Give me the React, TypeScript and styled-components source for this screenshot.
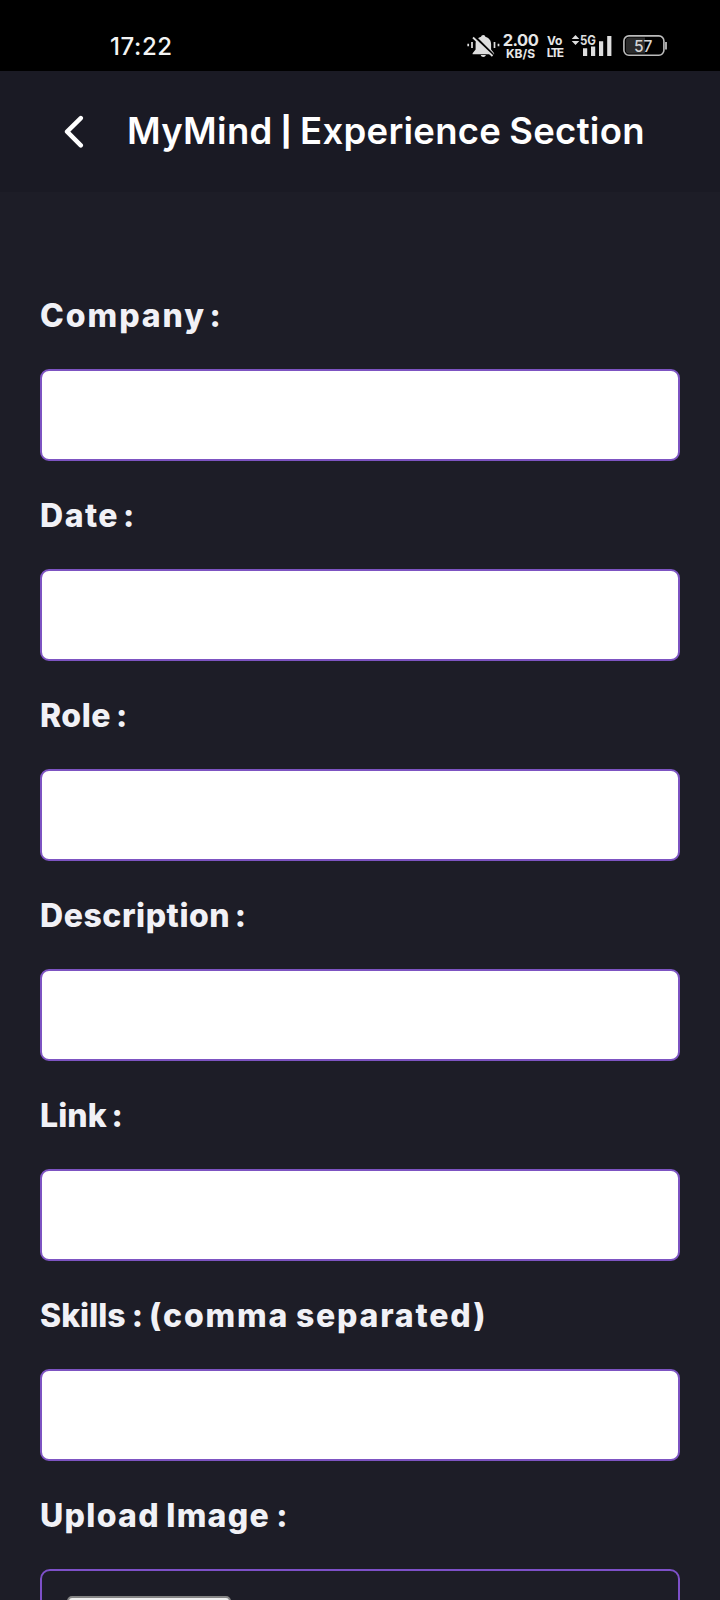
import React from "react";
import styled, { createGlobalStyle } from "styled-components";

const GlobalStyle = createGlobalStyle`
  * { box-sizing: border-box; }
  body { margin: 0; background: #1d1d27; }
`;

const Screen = styled.div`
  display: flex;
  flex-direction: column;
  width: 720px;
  height: 1600px;
  overflow: hidden;
  background: #1d1d27;
  font-family: Inter, "Liberation Sans", sans-serif;
`;

const StatusBar = styled.div`
  display: flex;
  align-items: flex-start;
  flex: none;
  height: 71px;
  padding: 34px 53px 0 110px;
  background: #000;
  color: #e6e6e6;
`;

const Clock = styled.div`
  flex: 1;
  padding-top: 1px;
  font-size: 24px;
  line-height: 24px;
  font-weight: 500;
  letter-spacing: 0.6px;
  color: #f4f4f4;
`;

const Stack = styled.div<{ $width: number; $gap: number }>`
  display: flex;
  flex-direction: column;
  align-items: center;
  width: ${(p) => p.$width}px;
  margin-right: ${(p) => p.$gap}px;
`;

const StackLine = styled.span<{ $size: number; $height: number; $spacing?: number }>`
  font-size: ${(p) => p.$size}px;
  line-height: ${(p) => p.$height}px;
  letter-spacing: ${(p) => p.$spacing ?? 0}px;
  font-weight: 700;
  white-space: nowrap;
`;

const StatusIcon = styled.svg<{ $gap?: number }>`
  flex: none;
  display: block;
  overflow: visible;
  margin-right: ${(p) => p.$gap ?? 0}px;
`;

const Header = styled.header`
  display: flex;
  align-items: center;
  flex: none;
  height: 121px;
  padding-left: 64px;
  background: #1a1a24;
`;

const BackButton = styled.button`
  display: flex;
  width: 22px;
  height: 34px;
  margin-right: 41px;
  padding: 0;
  border: 0;
  background: none;
  color: #fff;
`;

const Title = styled.h1`
  margin: 0;
  padding-bottom: 1px;
  font-size: 36.5px;
  line-height: 44px;
  font-weight: 600;
  letter-spacing: 0.28px;
  word-spacing: -1.5px;
  color: #fff;
  white-space: nowrap;
`;

const Divider = styled.span`
  font-size: 29px;
  font-weight: 800;
  vertical-align: 2px;
`;

const Form = styled.form`
  display: flex;
  flex-direction: column;
  padding: 97px 40px 0;
`;

const Field = styled.div`
  display: flex;
  flex-direction: column;
  flex: none;
  height: 200px;
`;

const Label = styled.label`
  height: 80px;
  padding-top: 6px;
  font-size: 32px;
  line-height: 42px;
  font-weight: 800;
  color: #f1f1f6;
  white-space: pre;
`;

const LabelText = styled.span<{ $letter: number; $word: number }>`
  letter-spacing: ${(p) => p.$letter}px;
  word-spacing: ${(p) => p.$word}px;
`;

const TextInput = styled.input`
  width: 640px;
  height: 92px;
  padding: 0 20px;
  border: 2px solid #7d54c2;
  border-radius: 9px;
  background: #fff;
  outline: none;
`;

const UploadBox = styled.div`
  flex: none;
  height: 110px;
  padding: 25px;
  border: 2px solid #7d50c8;
  border-radius: 10px;
`;

const FileButton = styled.button`
  display: block;
  width: 164px;
  height: 50px;
  border: 2px solid #858585;
  border-radius: 5px;
  background: #efefef;
`;

type FieldSpec = { label: string; letter: number; word: number; hint?: string };

const fields: FieldSpec[] = [
  { label: "Company :", letter: 1.95, word: -5.5 },
  { label: "Date :", letter: 1.5, word: -4.5 },
  { label: "Role :", letter: 0.5, word: -2.5 },
  { label: "Description :", letter: 0.55, word: -3 },
  { label: "Link :", letter: 0.1, word: -2.5 },
  { label: "Skills : ", letter: 0, word: -0.9, hint: "(comma separated)" },
];

const MutedBell = () => (
  <StatusIcon width="33" height="24" viewBox="0 0 33 24" $gap={3}>
    <path
      d="M16.300 1c1.200 0 1.900.8 2 1.800 3.500.9 5.800 3.700 5.800 7.200v5.500l3 3.700v1H5.600v-1l3-3.700V10c0-3.500 2-6.300 5.500-7.200.2-1 1-1.800 2.200-1.800z"
      fill="#dedede"
    />
    <path d="M13.700 21h5.200c-.4 1.300-1.300 2-2.600 2s-2.200-.7-2.600-2z" fill="#dedede" />
    <path d="M8 3l18 18" stroke="#000" strokeWidth="2.600" />
    <path d="M6 3.500l19.500 18.500" stroke="#dedede" strokeWidth="1.800" />
    <path d="M1.200 9.700v2.600M5 8v6M27.500 8v6M31.500 9.700v2.600" stroke="#dedede" strokeWidth="1.700" />
  </StatusIcon>
);

const Signal = () => (
  <StatusIcon width="41" height="24" viewBox="0 0 41 24" $gap={10}>
    <path d="M4.500 1l3.800 4H.7zM4.500 11l3.800-4H.7z" fill="#dedede" />
    <text
      x="9"
      y="11"
      fontFamily="Inter, sans-serif"
      fontSize="13"
      fontWeight="700"
      textLength="16"
      lengthAdjust="spacingAndGlyphs"
      fill="#dedede"
    >
      5G
    </text>
    <path d="M12 14.300h4.200V22H12zM20 12.500h4.200V22H20zM28 7.300h4.200V22H28zM36.200 2h4.200v20h-4.200z" fill="#dedede" />
  </StatusIcon>
);

const Battery = () => (
  <StatusIcon width="45" height="24" viewBox="0 0 45 24">
    <path d="M7 3.500h16v16H7a3 3 0 0 1-3-3v-10a3 3 0 0 1 3-3z" fill="#2c2c2c" />
    <rect x="1.900" y="1.900" width="40" height="19.300" rx="5" fill="none" stroke="#bcbcbc" strokeWidth="1.600" />
    <path d="M44 8v7.500" stroke="#bcbcbc" strokeWidth="1.800" />
    <text
      x="12"
      y="17.800"
      fontFamily="Inter, sans-serif"
      fontSize="16.500"
      fontWeight="500"
      textLength="18.500"
      lengthAdjust="spacingAndGlyphs"
      fill="#d4d4d4"
    >
      57
    </text>
  </StatusIcon>
);

export default function App() {
  return (
    <Screen>
      <GlobalStyle />
      <StatusBar>
        <Clock>17:22</Clock>
        <MutedBell />
        <Stack $width={35} $gap={8}>
          <StackLine $size={16.5} $height={13} $spacing={-0.5}>2.00</StackLine>
          <StackLine $size={12} $height={13}>KB/S</StackLine>
        </Stack>
        <Stack $width={17} $gap={8}>
          <StackLine $size={12} $height={14} $spacing={-0.3}>Vo</StackLine>
          <StackLine $size={12} $height={9} $spacing={-1.9}>LTE</StackLine>
        </Stack>
        <Signal />
        <Battery />
      </StatusBar>
      <Header>
        <BackButton type="button" aria-label="Back">
          <svg width="22" height="34" viewBox="0 0 22 34">
            <path
              d="M16.800 3.100L3.100 16.700l13.700 13.600"
              fill="none"
              stroke="currentColor"
              strokeWidth="4.500"
              strokeLinecap="round"
              strokeLinejoin="round"
            />
          </svg>
        </BackButton>
        <Title>
          MyMind <Divider>|</Divider> Experience Section
        </Title>
      </Header>
      <Form>
        {fields.map((field) => (
          <Field key={field.label}>
            <Label>
              <LabelText $letter={field.letter} $word={field.word}>
                {field.label}
              </LabelText>
              {field.hint && (
                <LabelText $letter={1.8} $word={-2}>
                  {field.hint}
                </LabelText>
              )}
            </Label>
            <TextInput aria-label={field.label} />
          </Field>
        ))}
        <Label>
          <LabelText $letter={1.3} $word={-2}>
            Upload Image :
          </LabelText>
        </Label>
        <UploadBox>
          <FileButton type="button" />
        </UploadBox>
      </Form>
    </Screen>
  );
}
